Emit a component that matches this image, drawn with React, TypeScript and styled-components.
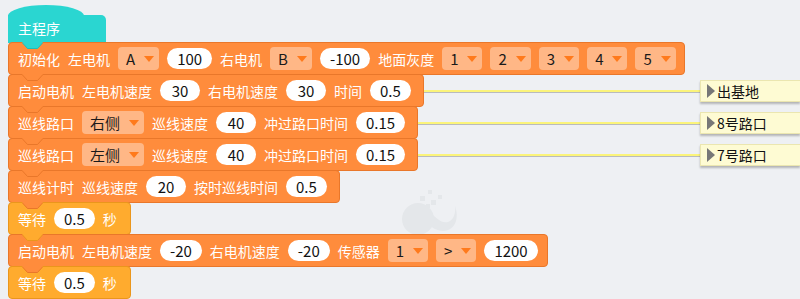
import React from 'react';
import styled, { createGlobalStyle } from 'styled-components';

const Orange = '#ff8c3c';
const OrangeEdge = '#e9772a';
const Amber = '#ffab2e';
const AmberEdge = '#ea961c';
const Cyan = '#2ad6d1';
const CyanEdge = '#1fbdb8';

const GlobalStyle = createGlobalStyle`
  body {
    margin: 0;
    background: #eef0f3;
    font-family: "Noto Sans CJK SC", "Noto Sans", sans-serif;
  }
`;

const Workspace = styled.div`
  position: relative;
  width: 800px;
  height: 299px;
  overflow: hidden;
  box-sizing: border-box;
  padding: 15px 0 0 8px;
  display: flex;
  flex-direction: column;
  align-items: flex-start;
`;

const Hat = styled.div`
  position: relative;
  width: 98px;
  height: 29px;
  box-sizing: border-box;
  padding: 0 0 2px 10px;
  display: flex;
  align-items: center;
  background: ${Cyan};
  border-radius: 0 5px 0 0;
  color: #fff;
  font-size: 14px;

  &::before {
    content: '';
    position: absolute;
    left: 0;
    top: -10px;
    width: 76px;
    height: 11px;
    background: ${Cyan};
    border-radius: 38px 38px 0 0 / 11px 11px 0 0;
  }
`;

const Row = styled.div`
  align-self: stretch;
  display: flex;
  align-items: center;
  margin-top: -1px;
`;

const Block = styled.div<{ $color: string; $edge: string; $padEnd: number }>`
  position: relative;
  flex: none;
  height: 33px;
  box-sizing: border-box;
  display: flex;
  align-items: center;
  gap: 8px;
  padding: 0 ${(p) => p.$padEnd}px 0 9px;
  background: ${(p) => p.$color};
  border: 1px solid ${(p) => p.$edge};
  border-radius: 4px;
  color: #fff;
  font-size: 14px;
  white-space: nowrap;
`;

const TabSvg = styled.svg`
  position: absolute;
  left: 13px;
  top: -1px;
`;

const Dropdown = styled.div`
  display: flex;
  align-items: center;
  gap: 9px;
  height: 23px;
  padding: 0 5px 0 8px;
  border-radius: 4px;
  background: rgba(255, 255, 255, 0.38);
  color: #1a1a1a;
  font-size: 15px;
`;

const Arrow = styled.span`
  width: 0;
  height: 0;
  border-left: 5px solid transparent;
  border-right: 5px solid transparent;
  border-top: 6px solid #ff7a1c;
`;

const Field = styled.div`
  min-width: 40px;
  height: 21px;
  box-sizing: border-box;
  padding: 0 10px;
  display: flex;
  align-items: center;
  justify-content: center;
  border-radius: 11px;
  background: #fff;
  color: #111;
  font-size: 15px;
`;

const Link = styled.div`
  flex: 1;
  height: 2px;
  background: #fbf47a;
  box-shadow: 0 1px 0 rgba(0, 0, 0, 0.22);
`;

const Note = styled.div`
  flex: none;
  width: 100px;
  height: 22px;
  box-sizing: border-box;
  display: flex;
  align-items: center;
  gap: 2px;
  padding-left: 6px;
  background: #fefbd3;
  border: 1px solid #ebe6b0;
  border-right: none;
  box-shadow: 0 2px 2px rgba(0, 0, 0, 0.25);
  color: #111;
  font-size: 14px;
`;

const NoteToggle = styled.span`
  width: 0;
  height: 0;
  border-top: 7px solid transparent;
  border-bottom: 7px solid transparent;
  border-left: 8px solid #777;
`;

const Watermark = styled.svg`
  position: absolute;
  left: 398px;
  top: 186px;
`;

type Part =
  | string
  | { dd: string }
  | { num: string };

type BlockDef = {
  color: string;
  edge: string;
  padEnd: number;
  parts: Part[];
  note?: string;
};

const orange = (padEnd: number, parts: Part[], note?: string): BlockDef => ({
  color: Orange,
  edge: OrangeEdge,
  padEnd,
  parts,
  note,
});

const wait: BlockDef = {
  color: Amber,
  edge: AmberEdge,
  padEnd: 13,
  parts: ['等待', { num: '0.5' }, '秒'],
};

const blocks: BlockDef[] = [
  orange(8, [
    '初始化', '左电机', { dd: 'A' }, { num: '100' }, '右电机', { dd: 'B' }, { num: '-100' },
    '地面灰度', { dd: '1' }, { dd: '2' }, { dd: '3' }, { dd: '4' }, { dd: '5' },
  ]),
  orange(12, ['启动电机', '左电机速度', { num: '30' }, '右电机速度', { num: '30' }, '时间', { num: '0.5' }], '出基地'),
  orange(12, ['巡线路口', { dd: '右侧' }, '巡线速度', { num: '40' }, '冲过路口时间', { num: '0.15' }], '8号路口'),
  orange(12, ['巡线路口', { dd: '左侧' }, '巡线速度', { num: '40' }, '冲过路口时间', { num: '0.15' }], '7号路口'),
  orange(12, ['巡线计时', '巡线速度', { num: '20' }, '按时巡线时间', { num: '0.5' }]),
  wait,
  orange(9, [
    '启动电机', '左电机速度', { num: '-20' }, '右电机速度', { num: '-20' }, '传感器',
    { dd: '1' }, { dd: '>' }, { num: '1200' },
  ]),
  wait,
];

// connection tab of the block above, hanging into this one
const Tab = ({ fill, stroke }: { fill: string; stroke: string }) => (
  <TabSvg width="21" height="8" viewBox="0 0 21 8">
    <polygon points="0,0 21,0 15.5,6.5 5.5,6.5" fill={fill} />
    <polyline points="0.5,1 5.5,6.5 15.5,6.5 20.5,1" fill="none" stroke={stroke} strokeWidth="1" />
  </TabSvg>
);

const renderPart = (part: Part, i: number) => {
  if (typeof part === 'string') return <span key={i}>{part}</span>;
  if ('dd' in part)
    return (
      <Dropdown key={i}>
        {part.dd}
        <Arrow />
      </Dropdown>
    );
  return <Field key={i}>{part.num}</Field>;
};

export default function App() {
  return (
    <>
      <GlobalStyle />
      <Workspace>
        <Watermark width="64" height="52" viewBox="0 0 64 52">
          <g fill="#e4e7ea">
            <circle cx="20" cy="33" r="16" />
            <path d="M30 26 C38 30 42 38 50 36 C56 34 58 26 57 20 C60 28 60 40 50 44 C42 47 34 42 30 38 Z" />
            <rect x="22" y="10" width="5" height="5" />
            <rect x="30" y="4" width="4" height="4" />
            <rect x="33" y="14" width="5" height="5" />
            <rect x="40" y="9" width="4" height="4" />
            <rect x="28" y="18" width="4" height="4" />
          </g>
        </Watermark>
        <Hat>主程序</Hat>
        {blocks.map((b, i) => {
          const above = i === 0 ? { color: Cyan, edge: CyanEdge } : blocks[i - 1];
          return (
            <Row key={i}>
              <Block $color={b.color} $edge={b.edge} $padEnd={b.padEnd}>
                <Tab fill={above.color} stroke={above.edge} />
                {b.parts.map(renderPart)}
              </Block>
              {b.note && (
                <>
                  <Link />
                  <Note>
                    <NoteToggle />
                    {b.note}
                  </Note>
                </>
              )}
            </Row>
          );
        })}
      </Workspace>
    </>
  );
}
